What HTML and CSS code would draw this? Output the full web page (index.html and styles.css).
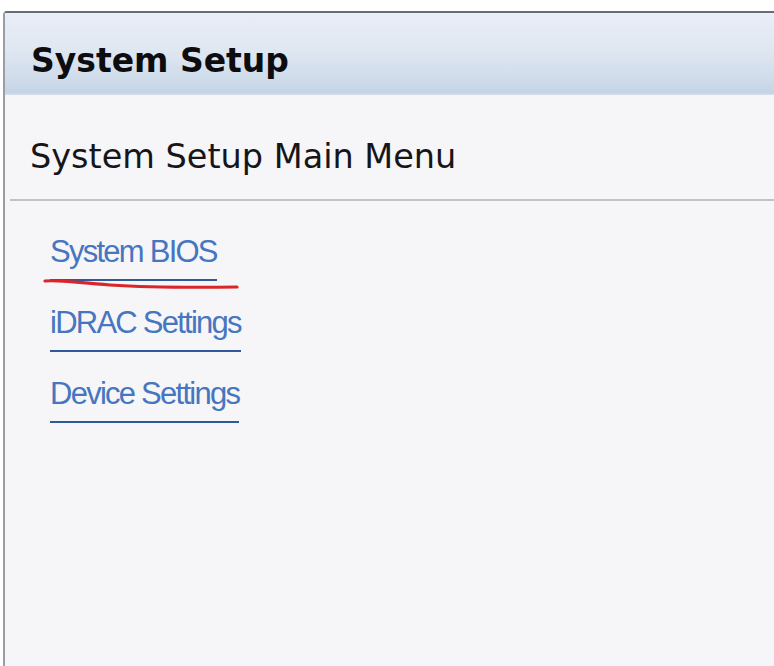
FILE: index.html
```html
<!DOCTYPE html>
<html>
<head>
<meta charset="utf-8">
<title>System Setup</title>
<link rel="stylesheet" href="styles.css">
</head>
<body>
<div class="panel">
  <div class="header">
    <h1 class="title">System Setup</h1>
  </div>
  <div class="content">
    <h2 class="menu-title">System Setup Main Menu</h2>
    <div class="separator"></div>
    <ul class="links">
      <li><a class="link" href="#">System BIOS</a></li>
      <li><a class="link" href="#">iDRAC Settings</a></li>
      <li><a class="link" href="#">Device Settings</a></li>
    </ul>
  </div>
</div>
<svg class="annotation" width="774" height="666" viewBox="0 0 774 666">
  <path d="M45 281 C 60 279.5, 78 283, 110 285 S 200 287.5, 237 287" fill="none" stroke="#d8262a" stroke-width="3.2" stroke-linecap="round"/>
</svg>
</body>
</html>
```

FILE: styles.css
```css
html, body {
  margin: 0;
  padding: 0;
  background: #ffffff;
}

body {
  position: relative;
  width: 774px;
  height: 666px;
  overflow: hidden;
}

.panel {
  margin: 11px 0 0 3px;
  height: 655px;
  border-top: 2px solid #676d74;
  border-left: 2px solid #9a9ea4;
  border-top-left-radius: 4px;
  background: #f6f5f8;
  display: flex;
  flex-direction: column;
}

.header {
  height: 82px;
  box-sizing: border-box;
  padding: 28px 0 0 26px;
  background: linear-gradient(to bottom, #e9eef7 0%, #dfe7f1 45%, #cfdcea 80%, #c4d4e5 97%, #d8e0ea 100%);
}

.title {
  margin: 0;
  font-family: "DejaVu Sans", sans-serif;
  font-weight: bold;
  font-size: 33px;
  line-height: 40px;
  color: #0d0d0f;
}

.content {
  flex: 1;
  padding: 42px 0 0 0;
}

.menu-title {
  margin: 0 0 0 25px;
  font-family: "DejaVu Sans", sans-serif;
  font-weight: normal;
  font-size: 33.5px;
  line-height: 40px;
  color: #161618;
}

.separator {
  margin: 22px 0 0 5px;
  height: 2px;
  background: #c3c3c6;
}

.links {
  list-style: none;
  margin: 34px 0 0 0;
  padding: 0 0 0 45px;
  display: flex;
  flex-direction: column;
  align-items: flex-start;
  gap: 25px;
}

.link {
  display: inline-block;
  font-family: "Liberation Sans", Arial, sans-serif;
  font-size: 31px;
  line-height: 34px;
  letter-spacing: -1.75px;
  color: #4676bf;
  text-decoration: none;
  padding-bottom: 10px;
  border-bottom: 2px solid #30589a;
}

.annotation {
  position: absolute;
  left: 0;
  top: 0;
  pointer-events: none;
}
```
